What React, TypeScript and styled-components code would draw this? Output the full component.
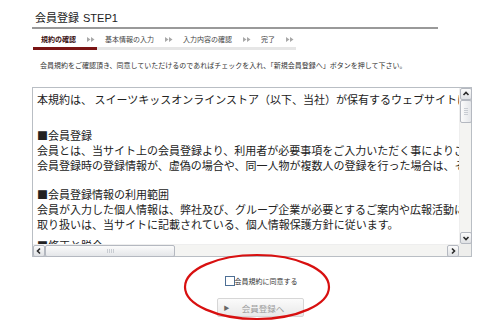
import React from "react";
import styled, { createGlobalStyle } from "styled-components";

const GlobalStyle = createGlobalStyle`
  body {
    margin: 0;
    background: #fff;
    font-family: "Noto Sans CJK JP", "Liberation Sans", sans-serif;
    color: #222;
  }
`;

const Page = styled.div`
  width: 500px;
  height: 330px;
  padding: 10px 0 0 32px;
  box-sizing: border-box;
  overflow: hidden;
`;

const Title = styled.h1`
  width: 403px;
  margin: 0;
  padding: 0 0 1px 3px;
  font-size: 11px;
  line-height: 15px;
  font-weight: normal;
  color: #222;
  border-bottom: 2px solid #999;
  & span {
    font-family: "Liberation Sans", sans-serif;
    margin-left: 4px;
  }
`;

const Steps = styled.ol`
  display: flex;
  list-style: none;
  margin: 5px 0 0 1px;
  padding: 0;
`;

const Step = styled.li<{ $active?: boolean }>`
  display: flex;
  align-items: center;
  gap: 11px;
  padding: 0 2px 3px 8px;
  font-size: 7px;
  line-height: 10px;
  font-weight: ${(p) => (p.$active ? "bold" : "normal")};
  color: ${(p) => (p.$active ? "#3a1010" : "#444")};
  border-bottom: 3px solid ${(p) => (p.$active ? "#7a1414" : "#e6e6e6")};
`;

const Note = styled.p`
  margin: 10px 0 0 8px;
  font-size: 7px;
  line-height: 10px;
  color: #333;
`;

const TermsBox = styled.div`
  margin-top: 17px;
  width: 440px;
  height: 170px;
  box-sizing: border-box;
  border: 1px solid #b9bec4;
  display: grid;
  grid-template-columns: 1fr 12px;
  grid-template-rows: 1fr 12px;
`;

const TermsText = styled.div`
  overflow: hidden;
  padding: 4px 0 0 4px;
  font-size: 11px;
  line-height: 15px;
  color: #222;
  white-space: nowrap;
`;

const Intro = styled.div`
  margin-bottom: 21px;
`;

const Section = styled.div<{ $gap: number }>`
  margin-bottom: ${(p) => p.$gap}px;
`;

const VScroll = styled.div`
  display: flex;
  flex-direction: column;
  background: #f4f4f2;
  border-left: 1px solid #eee;
`;

const HScroll = styled.div`
  display: flex;
  background: #f4f4f2;
  border-top: 1px solid #eee;
`;

const Corner = styled.div`
  background: #eeeeec;
`;

const ScrollButton = styled.div`
  width: 12px;
  height: 12px;
  flex: none;
  box-sizing: border-box;
  border: 1px solid #b4b8c0;
  border-radius: 2px;
  background: linear-gradient(#fbfbfb, #dfe1e4);
  display: flex;
  align-items: center;
  justify-content: center;
  color: #333;
`;

const Thumb = styled.div<{ $horizontal?: boolean }>`
  flex: none;
  box-sizing: border-box;
  ${(p) => (p.$horizontal ? "width: 130px; height: 12px;" : "width: 12px; height: 23px;")}
  border: 1px solid #b4b8c0;
  border-radius: 2px;
  background: ${(p) =>
    p.$horizontal
      ? "linear-gradient(#fbfbfb, #e4e6e9)"
      : "linear-gradient(to right, #fbfbfb, #e4e6e9)"};
  display: flex;
  align-items: center;
  justify-content: center;
  &::after {
    content: "";
    ${(p) => (p.$horizontal ? "width: 7px; height: 4px;" : "width: 4px; height: 7px;")}
    background: repeating-linear-gradient(
      ${(p) => (p.$horizontal ? "to right" : "to bottom")},
      #c8ccd2 0 1px,
      transparent 1px 2px
    );
  }
`;

const Track = styled.div`
  flex: 1;
`;

const Agreement = styled.div`
  position: relative;
  width: 440px;
  padding: 19px 0 0 16px;
  box-sizing: border-box;
  display: flex;
  flex-direction: column;
  align-items: center;
`;

const CheckLabel = styled.label`
  display: flex;
  align-items: flex-end;
  font-size: 7px;
  line-height: 9px;
  color: #333;
  margin-left: 2px;
`;

const Box = styled.span`
  width: 10px;
  height: 10px;
  box-sizing: border-box;
  border: 1px solid #4d6f95;
  background: #fff;
`;

const SubmitButton = styled.button`
  margin-top: 12px;
  width: 87px;
  height: 19px;
  padding: 0 0 0 6px;
  box-sizing: border-box;
  border: 1px solid #d6d6d6;
  border-radius: 2px;
  background: linear-gradient(#fbfbfb, #e9e9e9);
  display: flex;
  align-items: center;
  font-family: "Noto Sans CJK JP", sans-serif;
  font-size: 8.5px;
  color: #9a9a9a;
  & b {
    font-size: 6px;
    color: #666;
    font-weight: normal;
  }
  & span {
    flex: 1;
    text-align: center;
    padding-right: 6px;
  }
`;

const Mark = styled.svg`
  position: absolute;
  left: 151px;
  top: -4px;
  pointer-events: none;
`;

const Arrows = () => (
  <svg width="8" height="5" viewBox="0 0 8 5">
    <path d="M0 0 L3.5 2.5 L0 5 Z M4 0 L7.5 2.5 L4 5 Z" fill="#a8a8a8" />
  </svg>
);

const Chevron = ({ dir }: { dir: "up" | "down" | "left" | "right" }) => {
  const d = {
    up: "M1.5 5 L4 2.5 L6.5 5",
    down: "M1.5 3 L4 5.5 L6.5 3",
    left: "M5 1.5 L2.5 4 L5 6.5",
    right: "M3 1.5 L5.5 4 L3 6.5",
  }[dir];
  return (
    <svg width="8" height="8" viewBox="0 0 8 8">
      <path d={d} fill="none" stroke="#2a2a2a" strokeWidth="1.6" />
    </svg>
  );
};

const steps = ["規約の確認", "基本情報の入力", "入力内容の確認", "完了"];

const App = () => (
  <>
    <GlobalStyle />
    <Page>
      <Title>
        会員登録<span>STEP1</span>
      </Title>
      <Steps>
        {steps.map((s, i) => (
          <Step key={s} $active={i === 0}>
            {s}
            <Arrows />
          </Step>
        ))}
      </Steps>
      <Note>
        会員規約をご確認頂き、同意していただけるのであればチェックを入れ、「新規会員登録へ」ボタンを押して下さい。
      </Note>
      <TermsBox>
        <TermsText>
          <Intro>
            本規約は、 スイーツキッスオンラインストア（以下、当社）が保有するウェブサイトにおけるサービスの利用条件を定めるものです。
          </Intro>
          <Section $gap={14}>
            ■会員登録
            <br />
            会員とは、当サイト上の会員登録より、利用者が必要事項をご入力いただく事によりご登録いただいた方をいいます。
            <br />
            会員登録時の登録情報が、虚偽の場合や、同一人物が複数人の登録を行った場合は、その登録を削除させていただきます。
          </Section>
          <Section $gap={6}>
            ■会員登録情報の利用範囲
            <br />
            会員が入力した個人情報は、弊社及び、グループ企業が必要とするご案内や広報活動に利用させていただきます。
            <br />
            取り扱いは、当サイトに記載されている、個人情報保護方針に従います。
          </Section>
          <Section $gap={0}>
            ■修正と脱会
            <br />
            登録内容の修正や脱会は、マイページよりお手続きいただけます。
          </Section>
        </TermsText>
        <VScroll>
          <ScrollButton>
            <Chevron dir="up" />
          </ScrollButton>
          <Thumb />
          <Track />
          <ScrollButton>
            <Chevron dir="down" />
          </ScrollButton>
        </VScroll>
        <HScroll>
          <ScrollButton>
            <Chevron dir="left" />
          </ScrollButton>
          <Thumb $horizontal />
          <Track />
          <ScrollButton>
            <Chevron dir="right" />
          </ScrollButton>
        </HScroll>
        <Corner />
      </TermsBox>
      <Agreement>
        <CheckLabel>
          <Box />
          会員規約に同意する
        </CheckLabel>
        <SubmitButton type="button">
          <b>▶</b>
          <span>会員登録へ</span>
        </SubmitButton>
        <Mark width="148" height="68" viewBox="0 0 148 68">
          <ellipse cx="74" cy="34" rx="72" ry="32" fill="none" stroke="#d81010" strokeWidth="2.2" />
        </Mark>
      </Agreement>
    </Page>
  </>
);

export default App;
